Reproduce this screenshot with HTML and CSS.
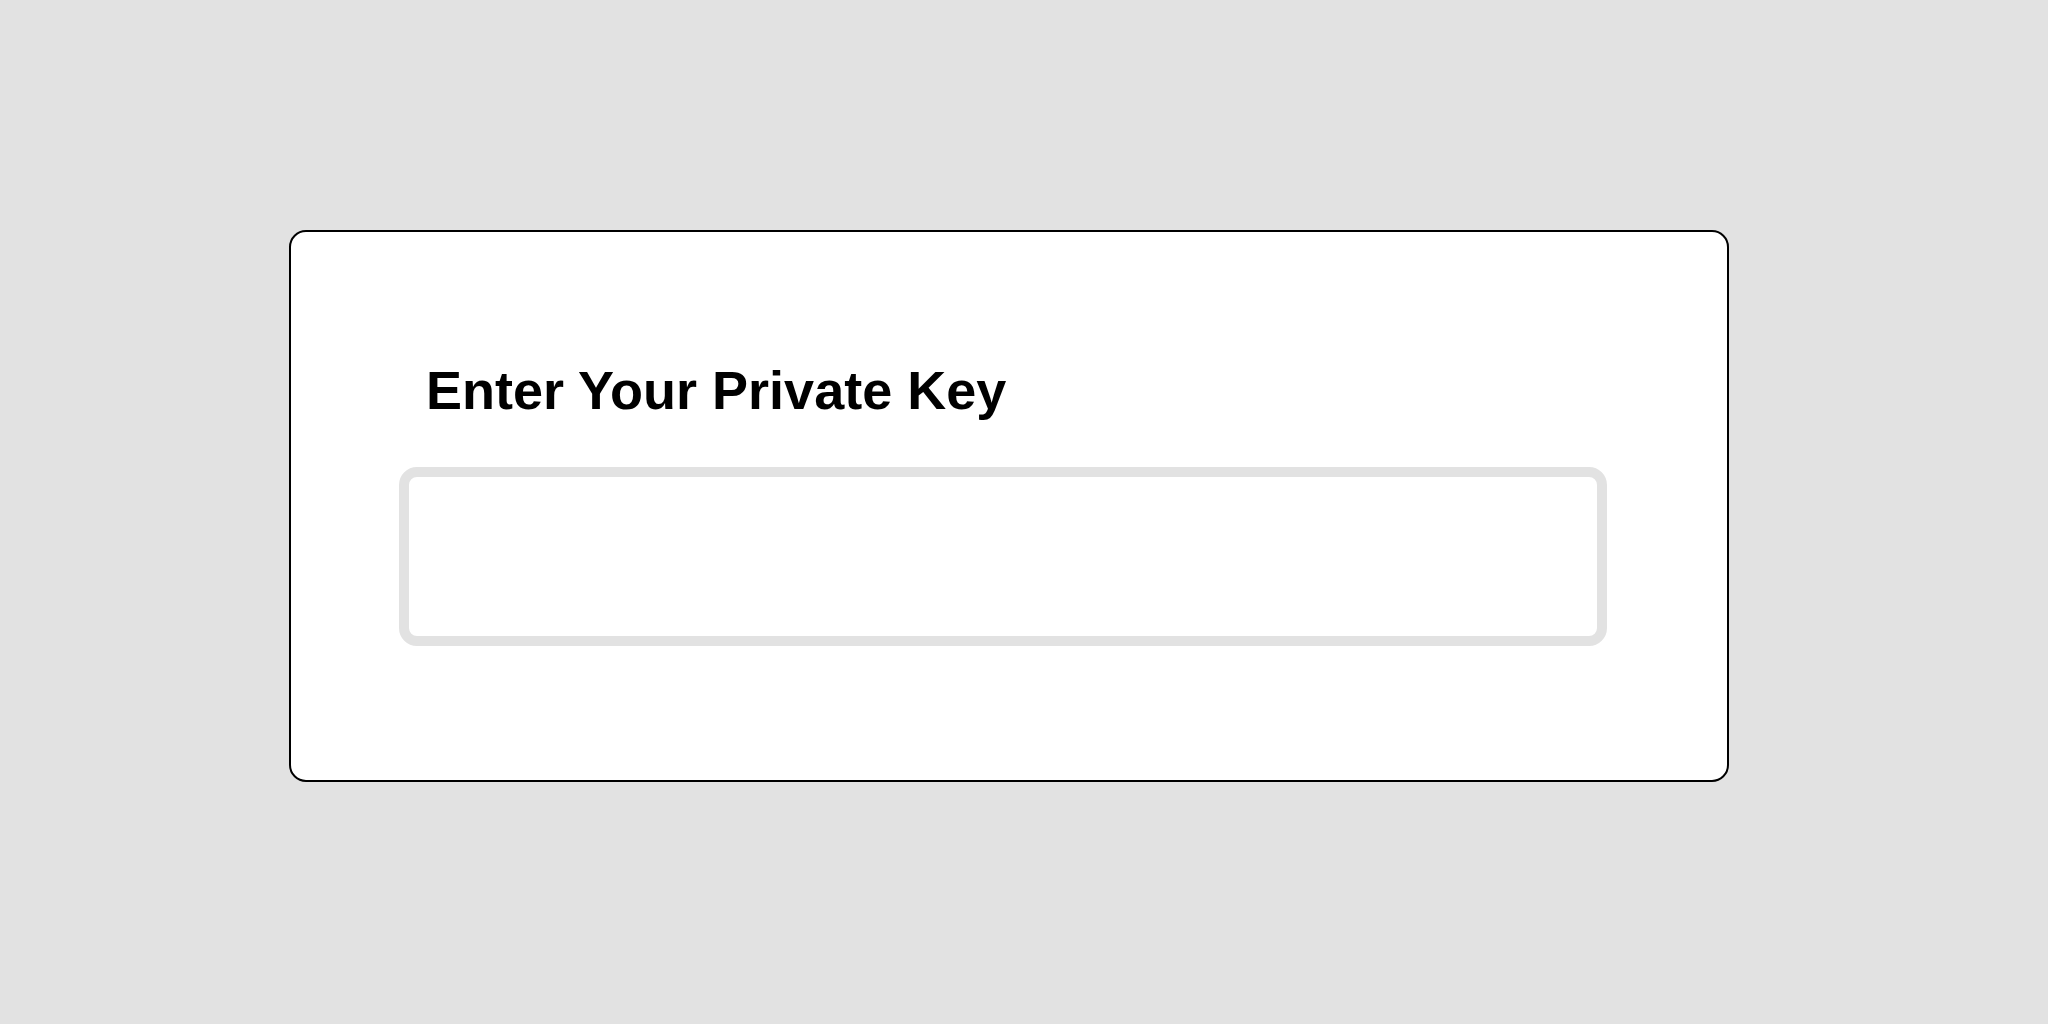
FILE: index.html
```html
<!DOCTYPE html>
<html lang="en">
<head>
    <meta charset="UTF-8">
    <meta name="viewport" content="width=device-width, initial-scale=1.0">
    <title>Private Key</title>
    <link rel="stylesheet" href="styles.css">
</head>
<body>
    <div class="card">
        <h1 class="title">Enter Your Private Key</h1>
        <textarea class="key-input"></textarea>
    </div>
</body>
</html>
```

FILE: styles.css
```css
*{
    margin: 0;
    padding: 0;
    box-sizing: border-box;
}
body{
    background-color: #e2e2e2;
    font-family: "Liberation Sans", Arial, sans-serif;
    padding: 230px 0 0 289px;
}
.card{
    width: 1440px;
    height: 552px;
    background-color: #fff;
    border: 2px solid #000;
    border-radius: 17px;
    padding-top: 128px;
}
.title{
    font-size: 54px;
    font-weight: bold;
    line-height: 60px;
    margin-left: 135px;
    color: #000;
}
.key-input{
    display: block;
    width: 1208px;
    height: 179px;
    margin: 47px 0 0 108px;
    border: 10px solid #e2e2e2;
    border-radius: 18px;
    outline: none;
    resize: none;
    background: #fff;
}
```
